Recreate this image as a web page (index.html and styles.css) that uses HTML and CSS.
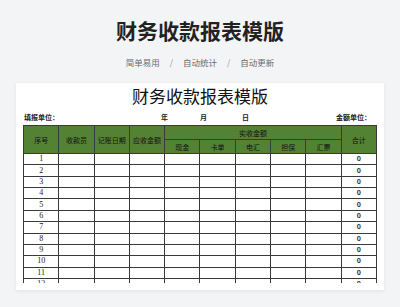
FILE: index.html
```html
<!DOCTYPE html>
<html lang="zh">
<head>
<meta charset="utf-8">
<link rel="stylesheet" href="styles.css">
</head>
<body>
<header class="hero">
  <h1 class="hero-title">财务收款报表模版</h1>
  <p class="hero-tags"><span>简单易用</span><span class="sep">/</span><span>自动统计</span><span class="sep">/</span><span>自动更新</span></p>
</header>
<main class="card">
  <div class="sheet">
    <div class="sheet-title">财务收款报表模版</div>
    <div class="sheet-info">
      <span class="info-unit">填报单位：</span>
      <span class="info-year">年</span>
      <span class="info-month">月</span>
      <span class="info-day">日</span>
      <span class="info-amount">金额单位：</span>
    </div>
    <table class="grid">
      <colgroup><col><col><col><col><col><col><col><col><col><col></colgroup>
      <thead>
        <tr class="h1">
          <th rowspan="2">序号</th>
          <th rowspan="2">收款员</th>
          <th rowspan="2">记账日期</th>
          <th rowspan="2">应收金额</th>
          <th colspan="5">实收金额</th>
          <th rowspan="2">合计</th>
        </tr>
        <tr class="h2">
          <th>现金</th><th>卡单</th><th>电汇</th><th>担保</th><th>汇票</th>
        </tr>
      </thead>
      <tbody>
        <tr><td class="num">1</td><td></td><td></td><td></td><td></td><td></td><td></td><td></td><td></td><td class="sum">0</td></tr>
        <tr><td class="num">2</td><td></td><td></td><td></td><td></td><td></td><td></td><td></td><td></td><td class="sum">0</td></tr>
        <tr><td class="num">3</td><td></td><td></td><td></td><td></td><td></td><td></td><td></td><td></td><td class="sum">0</td></tr>
        <tr><td class="num">4</td><td></td><td></td><td></td><td></td><td></td><td></td><td></td><td></td><td class="sum">0</td></tr>
        <tr><td class="num">5</td><td></td><td></td><td></td><td></td><td></td><td></td><td></td><td></td><td class="sum">0</td></tr>
        <tr><td class="num">6</td><td></td><td></td><td></td><td></td><td></td><td></td><td></td><td></td><td class="sum">0</td></tr>
        <tr><td class="num">7</td><td></td><td></td><td></td><td></td><td></td><td></td><td></td><td></td><td class="sum">0</td></tr>
        <tr><td class="num">8</td><td></td><td></td><td></td><td></td><td></td><td></td><td></td><td></td><td class="sum">0</td></tr>
        <tr><td class="num">9</td><td></td><td></td><td></td><td></td><td></td><td></td><td></td><td></td><td class="sum">0</td></tr>
        <tr><td class="num">10</td><td></td><td></td><td></td><td></td><td></td><td></td><td></td><td></td><td class="sum">0</td></tr>
        <tr><td class="num">11</td><td></td><td></td><td></td><td></td><td></td><td></td><td></td><td></td><td class="sum">0</td></tr>
        <tr><td class="num">12</td><td></td><td></td><td></td><td></td><td></td><td></td><td></td><td></td><td class="sum">0</td></tr>
      </tbody>
    </table>
  </div>
</main>
</body>
</html>
```

FILE: styles.css
```css
* { box-sizing: border-box; }
html, body { margin: 0; padding: 0; }
body {
  width: 400px;
  height: 307px;
  overflow: hidden;
  background: #f3f4f6;
  font-family: "Noto Sans CJK SC", "Noto Sans", sans-serif;
  color: #222;
}
.hero {
  padding-top: 16px;
  text-align: center;
}
.hero-title {
  margin: 0;
  font-size: 21px;
  line-height: 28px;
  font-weight: 700;
  color: #222;
}
.hero-tags {
  margin: 11px 0 0;
  font-size: 8.5px;
  line-height: 14px;
  color: #6b6b6b;
}
.hero-tags .sep {
  margin: 0 10px;
  color: #999;
}
.card {
  margin: 14px 16px 0;
  width: 368px;
  height: 207px;
  background: #fff;
  box-shadow: 0 1px 4px rgba(0, 0, 0, 0.08);
  padding: 0 7px 7px;
}
.sheet {
  height: 200px;
  overflow: hidden;
}
.sheet-title {
  height: 26px;
  line-height: 26px;
  text-align: center;
  font-size: 17px;
  color: #111;
}
.sheet-info {
  position: relative;
  height: 16px;
  line-height: 16px;
  font-size: 7px;
  font-weight: 700;
  color: #222;
}
.sheet-info span { position: absolute; top: 0; }
.info-unit { left: 1px; }
.info-year { left: 138px; }
.info-month { left: 177px; }
.info-day { left: 219px; }
.info-amount { left: 313px; }
.grid {
  width: 354px;
  table-layout: fixed;
  border-collapse: collapse;
  font-size: 7px;
}
.grid th, .grid td {
  border: 1px solid #3a3a3a;
  padding: 0;
  text-align: center;
  vertical-align: middle;
  overflow: hidden;
  white-space: nowrap;
}
.grid th {
  background: #548235;
  color: #111;
  font-weight: 400;
  font-size: 7px;
}
.grid tr.h1, .grid tr.h2 { height: 14px; }
.grid tbody tr { height: 11.36px; }
.grid td {
  line-height: 10px;
}
.grid td.num {
  font-family: "Liberation Serif", serif;
  font-size: 8px;
  color: #222;
}
.grid td.sum {
  font-family: "Liberation Sans", sans-serif;
  font-size: 7.5px;
  font-weight: 700;
  color: #333;
}
```
